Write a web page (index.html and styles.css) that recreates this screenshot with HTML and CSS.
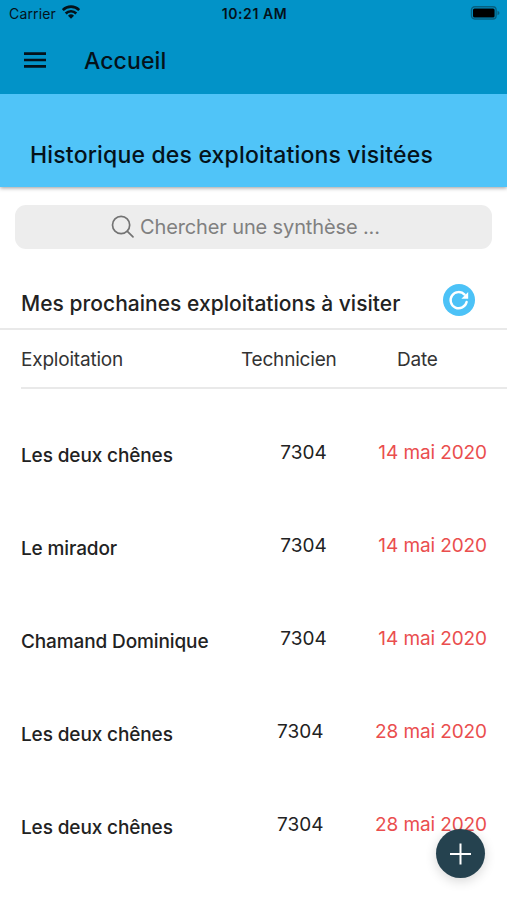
FILE: index.html
```html
<!DOCTYPE html>
<html lang="fr">
<head>
<meta charset="utf-8">
<title>Accueil</title>
<link rel="stylesheet" href="styles.css">
</head>
<body>
<header class="topbar">
  <div class="status">
    <div class="carrier"><span>Carrier</span>
      <svg class="wifi" viewBox="0 0 18 14" width="18" height="14" aria-hidden="true"><g fill="none" stroke="#04121a" stroke-width="2.6"><path d="M.8 5a11.6 11.6 0 0 1 16.4 0"/><path d="M3.7 8.5a7.5 7.5 0 0 1 10.6 0"/></g><path d="M9 13.8 6 10.8a4.3 4.3 0 0 1 6 0z" fill="#04121a"/></svg>
    </div>
    <span class="clock">10:21 AM</span>
    <svg class="battery" viewBox="0 0 30 14" width="30" height="14" aria-hidden="true"><rect x="1.5" y=".8" width="24.6" height="12.2" rx="3.2" fill="none" stroke="#066080" stroke-width="1.4"/><rect x="3" y="2.4" width="21.6" height="9" rx="1.5" fill="#000"/><path d="M27.5 4.7q2 1 2 2.3t-2 2.3z" fill="#066080"/></svg>
  </div>
  <div class="nav">
    <svg class="menu" viewBox="0 0 24 18" width="24" height="18" aria-hidden="true"><path d="M1 2.6h22M1 9h22M1 15.3h22" stroke="#04121a" stroke-width="2.7"/></svg>
    <h1>Accueil</h1>
  </div>
</header>
<section class="banner"><h2>Historique des exploitations visitées</h2></section>
<main>
  <div class="search">
    <svg viewBox="0 0 24 24" width="24" height="24" fill="none" stroke="#737373" stroke-width="1.7" stroke-linecap="round" aria-hidden="true"><circle cx="10.1" cy="10" r="8.6"/><path d="m16.4 16.3 5.6 5.6"/></svg>
    <span>Chercher une synthèse ...</span>
  </div>
  <div class="section-title">
    <h3>Mes prochaines exploitations à visiter</h3>
    <svg class="refresh" viewBox="0 0 32 32" width="32" height="32" aria-hidden="true"><circle cx="16" cy="16" r="16" fill="#4cc2f7"/><path d="M21.6 10.6A8.1 8.1 0 1 0 23.6 18" fill="none" stroke="#fff" stroke-width="2.4" stroke-linecap="round"/><path d="M25.2 8v6.8H18.4z" fill="#fff"/></svg>
  </div>
  <div class="row head"><span>Exploitation</span><span>Technicien</span><span>Date</span></div>
  <div class="rows">
    <div class="row"><span class="name">Les deux chênes</span><span class="num">7304</span><span class="when">14 mai 2020</span></div>
    <div class="row"><span class="name">Le mirador</span><span class="num">7304</span><span class="when">14 mai 2020</span></div>
    <div class="row"><span class="name">Chamand Dominique</span><span class="num">7304</span><span class="when">14 mai 2020</span></div>
    <div class="row"><span class="name">Les deux chênes</span><span class="num">7304</span><span class="when">28 mai 2020</span></div>
    <div class="row"><span class="name">Les deux chênes</span><span class="num">7304</span><span class="when">28 mai 2020</span></div>
  </div>
</main>
<div class="fab"><svg viewBox="0 0 22 22" width="22" height="22" aria-hidden="true"><path d="M10.5 .5v21M0 11h21" stroke="#fff" stroke-width="2"/></svg></div>
</body>
</html>
```
FILE: styles.css
```css
* { box-sizing: border-box; }
body { margin: 0; height: 900px; overflow: hidden; background: #fff; color: #222; font-family: Inter, "Liberation Sans", sans-serif; white-space: nowrap; }
h1, h2, h3 { margin: 0; font-weight: 500; }
.topbar { position: relative; z-index: 1; height: 94px; background: #0293c8; color: #04121a; }
.status { height: 28px; padding: 0 7px 2px 9px; display: grid; grid-template-columns: 1fr auto 1fr; align-items: center; font-size: 14px; }
.carrier { display: flex; align-items: center; gap: 6px; letter-spacing: .15px; }
.wifi { margin-top: -2px; }
.clock { font-weight: 600; letter-spacing: .6px; }
.battery { justify-self: end; }
.nav { height: 66px; padding-left: 23px; display: flex; align-items: center; gap: 37px; }
.menu { margin-top: -2px; }
.nav h1 { font-size: 23px; line-height: 28px; letter-spacing: .1px; }
.banner { height: 93px; padding: 47px 0 0 30px; background: #50c4f8; color: #04121a; box-shadow: 0 1px 4px rgba(0,0,0,.4); }
.banner h2 { font-size: 23px; line-height: 28px; letter-spacing: .18px; }
.search { margin: 18px 15px 0; height: 44px; border-radius: 11px; background: #ededed; display: flex; align-items: center; padding-left: 96px; gap: 5px; color: #808080; font-size: 20px; letter-spacing: -.13px; }
.section-title { height: 81px; padding: 0 32px 0 21px; display: flex; align-items: flex-end; justify-content: space-between; border-bottom: 2px solid #e9e9e9; }
.section-title h3 { font-size: 21px; line-height: 28px; margin-bottom: 10px; letter-spacing: .03px; }
.refresh { margin-bottom: 12px; }
.row { display: grid; grid-template-columns: 220px 156px 1fr; align-items: center; }
.head { height: 59px; margin-left: 21px; padding-top: 1px; border-bottom: 2px solid #e9e9e9; color: #333; font-size: 19px; letter-spacing: -.2px; }
.rows { padding: 17px 20px 0 21px; }
.rows .row { height: 93px; grid-template-columns: 1fr 98px auto; font-size: 19px; letter-spacing: -.1px; }
.name { font-weight: 500; padding-top: 6px; letter-spacing: -.12px; }
.when { color: #ea4e4e; }
.num { letter-spacing: 0; }
.fab { position: absolute; z-index: 2; left: 436px; top: 829px; width: 49px; height: 49px; border-radius: 50%; background: #25424f; display: flex; align-items: center; justify-content: center; box-shadow: 0 3px 12px rgba(0,0,0,.16); }
```
